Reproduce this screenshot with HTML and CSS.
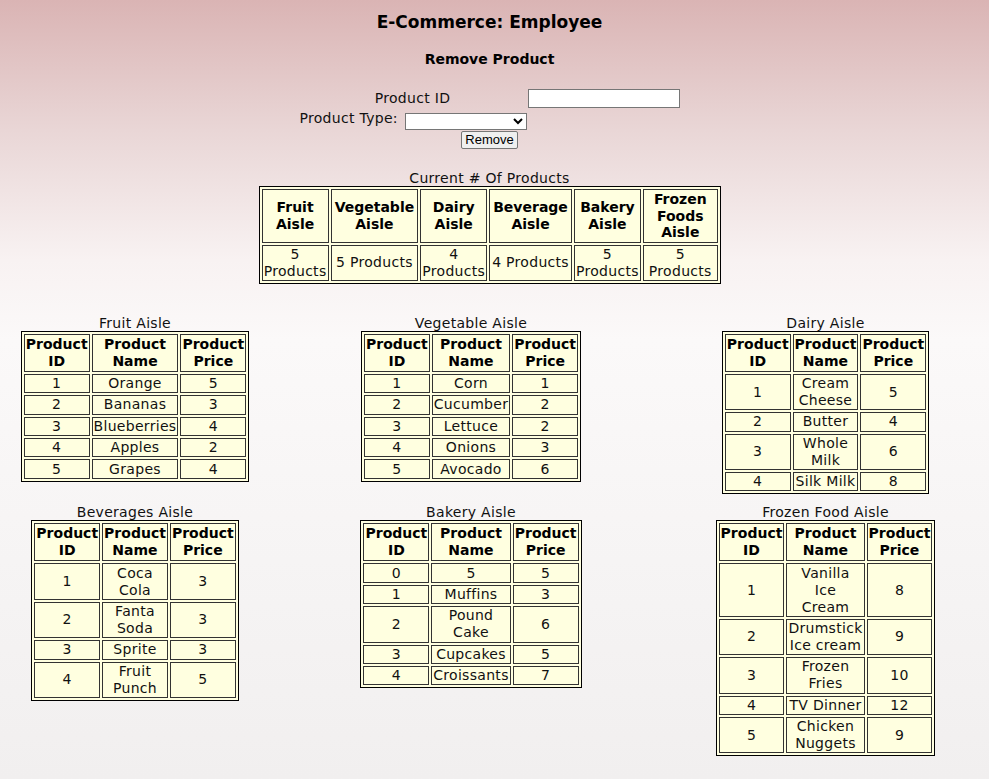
FILE: index.html
```html
<!DOCTYPE html>
<html>
<head>
<meta charset="utf-8">
<title>E-Commerce: Employee</title>
<link rel="stylesheet" href="styles.css">
</head>
<body>
<h1 class="title">E-Commerce: Employee</h1>
<h2 class="subtitle">Remove Product</h2>
<form class="remove-form">
  <div class="form-grid">
    <label class="lbl-id" for="pid">Product ID</label>
    <input class="txt" id="pid" type="text">
    <div class="type-cell"><label for="ptype">Product Type:</label> <select id="ptype" class="sel"><option></option></select></div>
    <div></div>
  </div>
  <div class="btn-row"><button type="button" class="btn">Remove</button></div>
</form>

<table class="grid-table counts">
  <caption>Current # Of Products</caption>
  <tr><th>Fruit Aisle</th><th>Vegetable Aisle</th><th>Dairy Aisle</th><th>Beverage Aisle</th><th>Bakery Aisle</th><th>Frozen Foods Aisle</th></tr>
  <tr><td>5 Products</td><td>5 Products</td><td>4 Products</td><td>4 Products</td><td>5 Products</td><td>5 Products</td></tr>
</table>

<div class="aisles">
  <table class="grid-table">
    <caption>Fruit Aisle</caption>
    <tr><th>Product ID</th><th>Product Name</th><th>Product Price</th></tr>
    <tr><td>1</td><td>Orange</td><td>5</td></tr>
    <tr><td>2</td><td>Bananas</td><td>3</td></tr>
    <tr><td>3</td><td>Blueberries</td><td>4</td></tr>
    <tr><td>4</td><td>Apples</td><td>2</td></tr>
    <tr><td>5</td><td>Grapes</td><td>4</td></tr>
  </table>
  <table class="grid-table">
    <caption>Vegetable Aisle</caption>
    <tr><th>Product ID</th><th>Product Name</th><th>Product Price</th></tr>
    <tr><td>1</td><td>Corn</td><td>1</td></tr>
    <tr><td>2</td><td>Cucumber</td><td>2</td></tr>
    <tr><td>3</td><td>Lettuce</td><td>2</td></tr>
    <tr><td>4</td><td>Onions</td><td>3</td></tr>
    <tr><td>5</td><td>Avocado</td><td>6</td></tr>
  </table>
  <table class="grid-table">
    <caption>Dairy Aisle</caption>
    <tr><th>Product ID</th><th>Product Name</th><th>Product Price</th></tr>
    <tr><td>1</td><td>Cream Cheese</td><td>5</td></tr>
    <tr><td>2</td><td>Butter</td><td>4</td></tr>
    <tr><td>3</td><td>Whole Milk</td><td>6</td></tr>
    <tr><td>4</td><td>Silk Milk</td><td>8</td></tr>
  </table>
  <table class="grid-table">
    <caption>Beverages Aisle</caption>
    <tr><th>Product ID</th><th>Product Name</th><th>Product Price</th></tr>
    <tr><td>1</td><td>Coca Cola</td><td>3</td></tr>
    <tr><td>2</td><td>Fanta Soda</td><td>3</td></tr>
    <tr><td>3</td><td>Sprite</td><td>3</td></tr>
    <tr><td>4</td><td>Fruit Punch</td><td>5</td></tr>
  </table>
  <table class="grid-table">
    <caption>Bakery Aisle</caption>
    <tr><th>Product ID</th><th>Product Name</th><th>Product Price</th></tr>
    <tr><td>0</td><td>5</td><td>5</td></tr>
    <tr><td>1</td><td>Muffins</td><td>3</td></tr>
    <tr><td>2</td><td>Pound Cake</td><td>6</td></tr>
    <tr><td>3</td><td>Cupcakes</td><td>5</td></tr>
    <tr><td>4</td><td>Croissants</td><td>7</td></tr>
  </table>
  <table class="grid-table">
    <caption>Frozen Food Aisle</caption>
    <tr><th>Product ID</th><th>Product Name</th><th>Product Price</th></tr>
    <tr><td>1</td><td>Vanilla<br>Ice<br>Cream</td><td>8</td></tr>
    <tr><td>2</td><td>Drumstick Ice cream</td><td>9</td></tr>
    <tr><td>3</td><td>Frozen Fries</td><td>10</td></tr>
    <tr><td>4</td><td>TV Dinner</td><td>12</td></tr>
    <tr><td>5</td><td>Chicken Nuggets</td><td>9</td></tr>
  </table>
</div>
</body>
</html>
```
FILE: styles.css
```css
html {
  min-height: 100%;
  background: linear-gradient(to bottom, #dab4b4 0px, #e9d6d6 130px, #f8f2f2 260px, #fbf9f9 340px, #f6f4f4 560px, #f1efef 779px);
}
body {
  margin: 0 18px 8px 8px;
  font-family: "DejaVu Sans", Verdana, sans-serif;
  font-size: 14px;
  letter-spacing: 0.3px;
  color: #111;
}
.title {
  margin: 12px 0 0;
  font-size: 17px;
  line-height: 20px;
  letter-spacing: 0;
  text-align: center;
  color: #000;
}
.subtitle {
  margin: 19px 0 0;
  font-size: 14px;
  line-height: 17px;
  letter-spacing: 0;
  text-align: center;
  color: #000;
}
.remove-form {
  margin-top: 21px;
}
.form-grid {
  display: grid;
  grid-template-columns: 226px 152px;
  column-gap: 2px;
  row-gap: 2px;
  justify-content: center;
  align-items: center;
}
.lbl-id {
  text-align: center;
  line-height: 17px;
}
.txt {
  box-sizing: border-box;
  width: 152px;
  height: 19px;
  margin: 0;
  padding: 0 2px;
  border: 1px solid #767676;
  background: #fff;
  font-size: 13px;
}
.type-cell {
  text-align: center;
  white-space: nowrap;
  line-height: 17px;
}
.sel {
  box-sizing: border-box;
  width: 122px;
  height: 17px;
  margin: 0 0 0 2px;
  padding: 0;
  border: 1px solid #767676;
  background: #fff;
  vertical-align: -3px;
  font-size: 12px;
}
.btn-row {
  display: flex;
  justify-content: center;
  margin-top: 1px;
}
.btn {
  box-sizing: border-box;
  width: 57px;
  height: 18px;
  padding: 0;
  border: 1px solid #767676;
  border-radius: 2px;
  background: #efefef;
  font-family: "Liberation Sans", Arial, sans-serif;
  font-size: 13px;
  line-height: 16px;
  letter-spacing: 0;
  color: #000;
}
.grid-table {
  width: 1px;
  border: 1px solid #000;
  border-spacing: 2px;
  background: #ffffe0;
}
.grid-table caption {
  line-height: 16px;
  white-space: nowrap;
  color: #111;
}
.grid-table th,
.grid-table td {
  border: 1px solid #333;
  line-height: 17px;
  text-align: center;
}
.grid-table th {
  padding: 1px;
  font-weight: bold;
  letter-spacing: 0;
  color: #000;
}
.grid-table td {
  padding: 0.2px 1px;
}
.counts {
  width: 462px;
  margin: 21px auto 0;
}
.counts th:nth-child(1) { width: 62px; }
.counts th:nth-child(2) { width: 83px; }
.counts th:nth-child(3) { width: 62px; }
.counts th:nth-child(4) { width: 78px; }
.counts th:nth-child(5) { width: 63px; }
.counts th:nth-child(6) { width: 70px; }
.counts th {
  line-height: 16.5px;
}
.counts td {
  line-height: 17px;
}
.aisles {
  display: grid;
  grid-template-columns: 254px 418px 291px;
  row-gap: 10px;
  justify-items: center;
  align-items: start;
  margin-top: 31px;
}
```
